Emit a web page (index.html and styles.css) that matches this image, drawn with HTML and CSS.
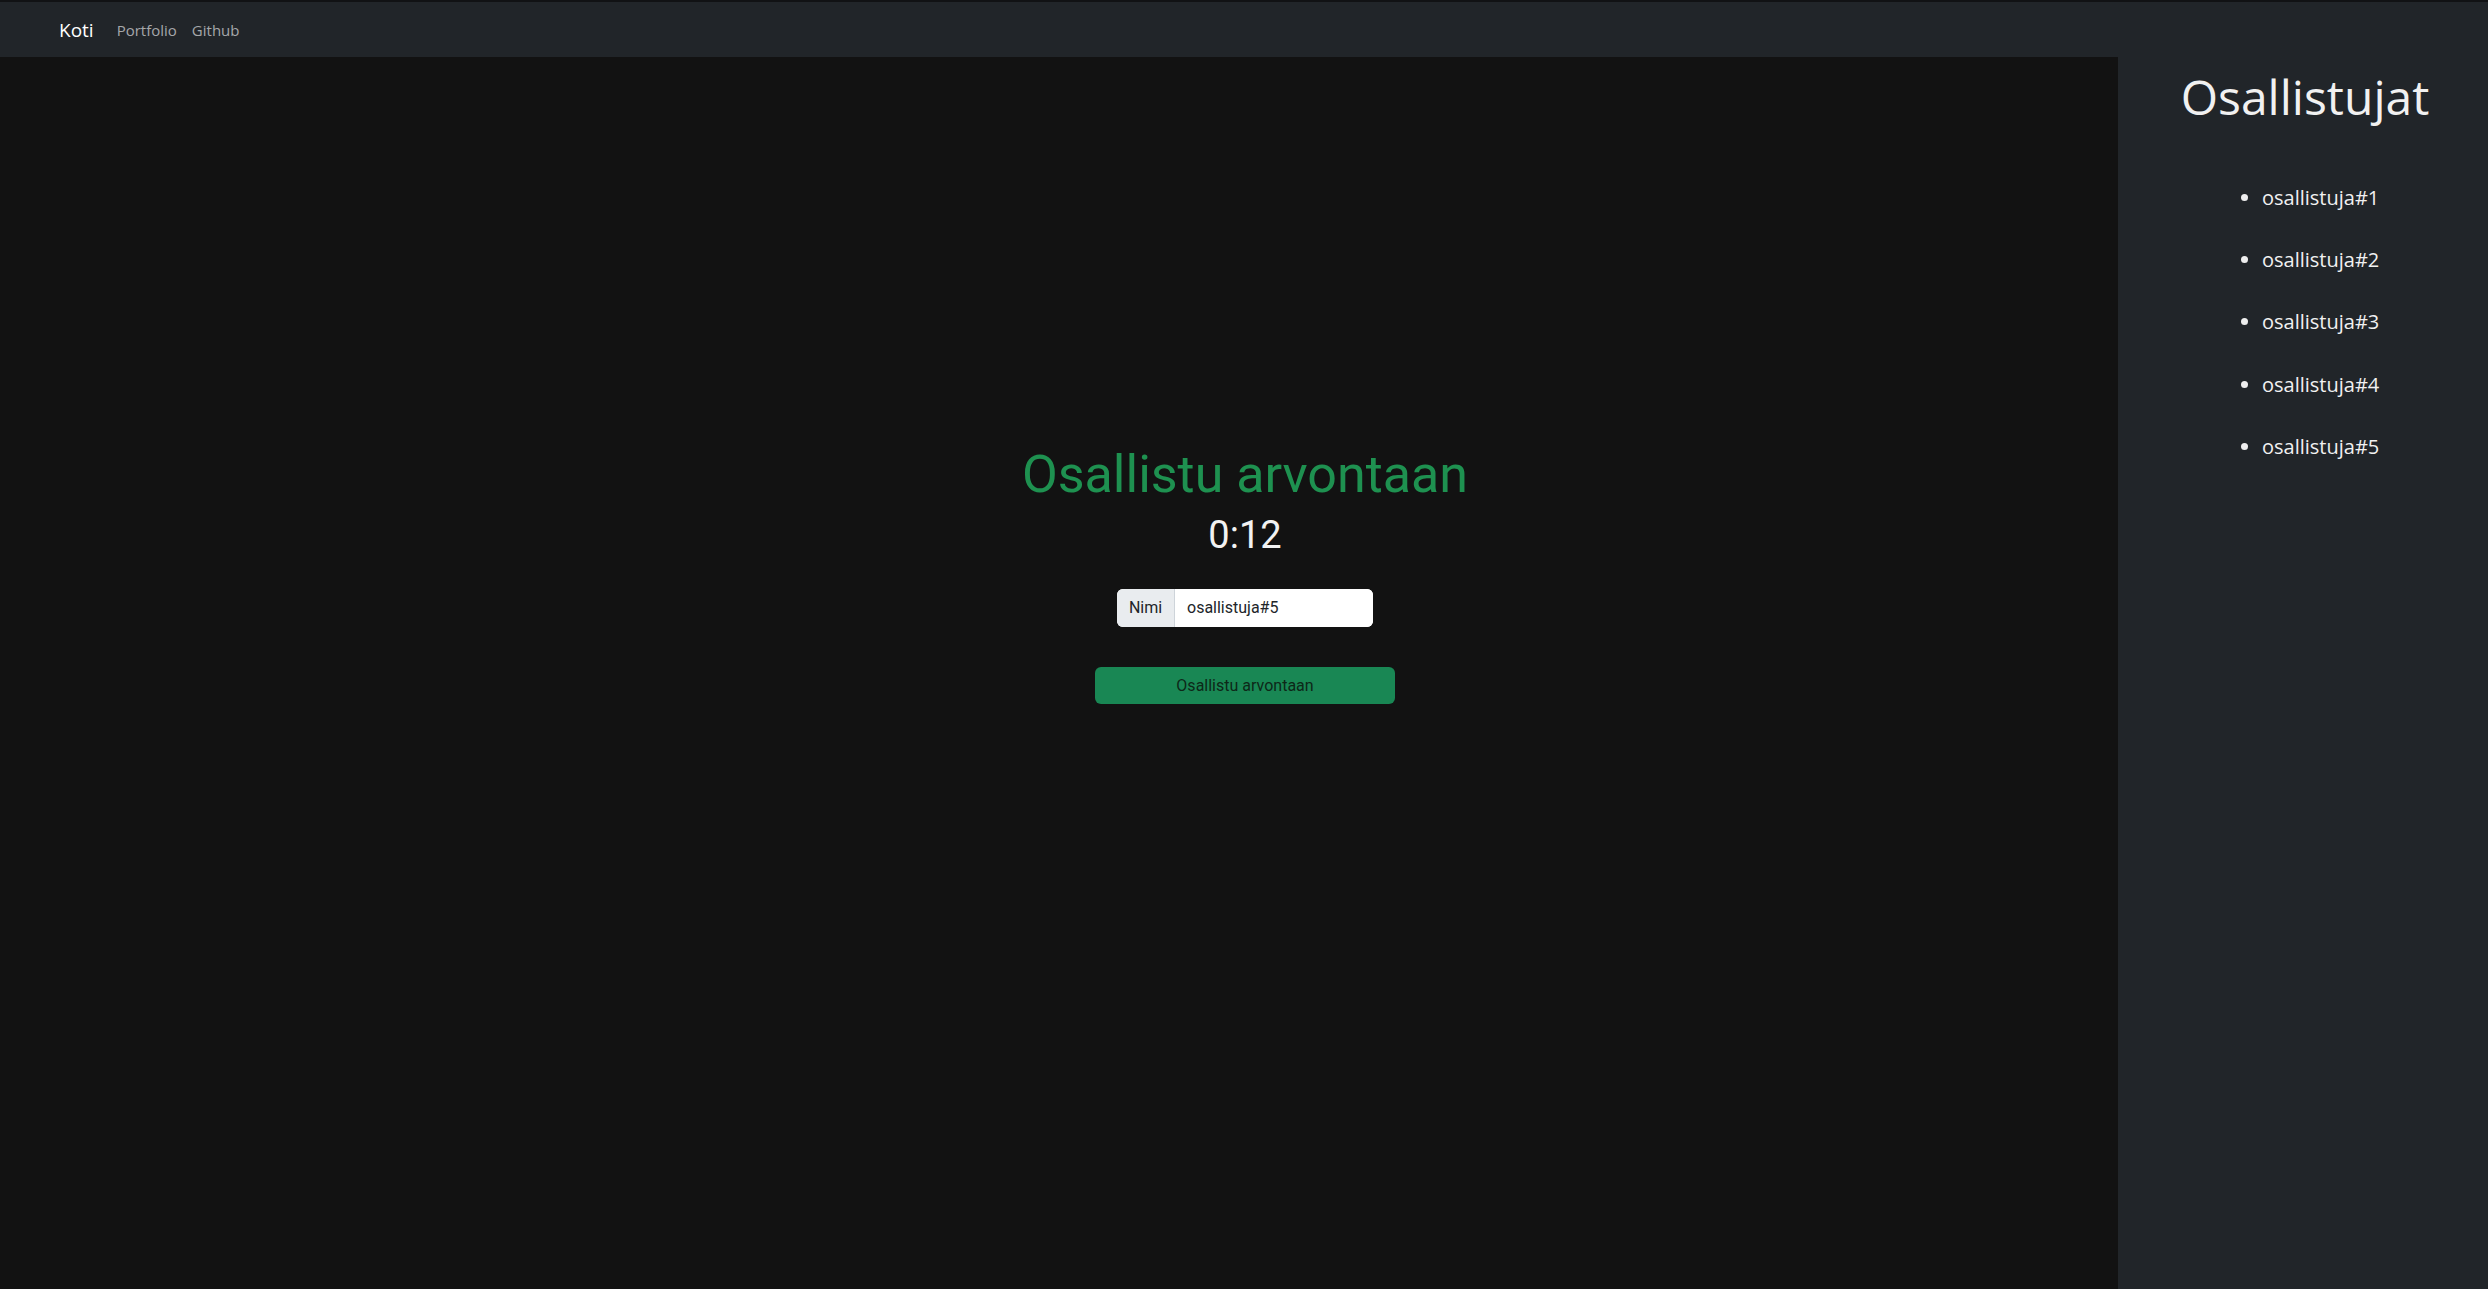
FILE: index.html
```html
<!DOCTYPE html>
<html lang="fi">
<head>
<meta charset="utf-8">
<title>Osallistu arvontaan</title>
<link rel="stylesheet" href="styles.css">
</head>
<body>
<nav class="navbar">
  <a class="brand" href="#">Koti</a>
  <a class="nav-link" href="#">Portfolio</a>
  <a class="nav-link" href="#">Github</a>
</nav>
<main class="main">
  <h1 class="title">Osallistu arvontaan</h1>
  <div class="timer">0:12</div>
  <div class="input-group">
    <span class="addon">Nimi</span>
    <input class="field" type="text" value="osallistuja#5">
  </div>
  <button class="btn">Osallistu arvontaan</button>
</main>
<aside class="sidebar">
  <h2 class="side-title">Osallistujat</h2>
  <ul class="list">
    <li>osallistuja#1</li>
    <li>osallistuja#2</li>
    <li>osallistuja#3</li>
    <li>osallistuja#4</li>
    <li>osallistuja#5</li>
  </ul>
</aside>
</body>
</html>
```
FILE: styles.css
```css
html, body {
  margin: 0;
  padding: 0;
  height: 100%;
}
body {
  background: #121212;
  font-family: "Open Sans", "Noto Sans", sans-serif;
  overflow: hidden;
}
.navbar {
  box-sizing: border-box;
  height: 57px;
  border-top: 2px solid #111214;
  background: #212529;
  display: flex;
  align-items: center;
  padding-left: 59px;
}
.brand {
  color: #ffffff;
  font-size: 19px;
  text-decoration: none;
  margin-right: 23px;
}
.nav-link {
  color: #a5a7a9;
  font-size: 15px;
  text-decoration: none;
  margin-right: 15px;
}
.main {
  display: flex;
  flex-direction: column;
  align-items: center;
  padding-top: 387px;
  padding-left: 2px;
  font-family: Roboto, sans-serif;
}
.title {
  margin: 0;
  font-family: Roboto, sans-serif;
  font-weight: 400;
  font-size: 52px;
  line-height: 1.2;
  color: #1e9150;
}
.timer {
  color: #f2f2f2;
  font-size: 38px;
  line-height: 1.2;
  margin-top: 7px;
}
.input-group {
  display: flex;
  width: 256px;
  height: 38px;
  margin-top: 30px;
  border-radius: 6px;
  overflow: hidden;
  background: #fff;
}
.addon {
  width: 58px;
  box-sizing: border-box;
  background: #e9ecef;
  border-right: 1px solid #ced4da;
  color: #212529;
  font-size: 16px;
  display: flex;
  align-items: center;
  justify-content: center;
}
.field {
  flex: 1;
  border: 0;
  outline: none;
  padding: 0 12px;
  font-family: Roboto, sans-serif;
  font-size: 16px;
  color: #212529;
  background: #fff;
  min-width: 0;
}
.btn {
  margin-top: 40px;
  width: 300px;
  height: 37px;
  border: 0;
  border-radius: 6px;
  background: #198754;
  color: #0d2818;
  font-family: Roboto, sans-serif;
  font-size: 16px;
}
.sidebar {
  position: fixed;
  top: 0;
  right: 0;
  width: 370px;
  height: 100%;
  background: #212529;
  border-top: 2px solid #111214;
  box-sizing: border-box;
  color: #f1f1f1;
}
.side-title {
  margin: 0;
  padding-top: 66px;
  padding-left: 4px;
  text-align: center;
  font-weight: 400;
  font-size: 48px;
  line-height: 1.2;
}
.list {
  margin: 57px 0 0 0;
  padding-left: 144px;
  font-size: 20px;
}
.list li {
  line-height: 30px;
  margin-bottom: 32.4px;
}
.list li::marker {
  color: #eee;
}
```
